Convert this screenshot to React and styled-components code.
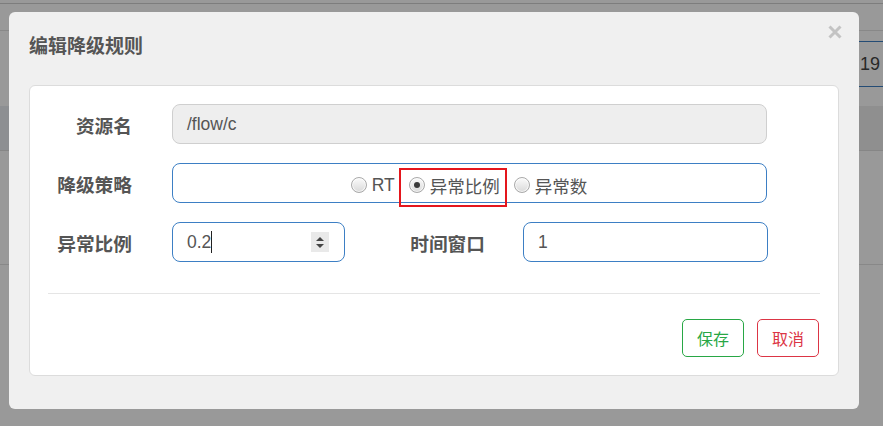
import React from "react";
import styled, { createGlobalStyle } from "styled-components";

const GlobalStyle = createGlobalStyle`
  html, body {
    margin: 0;
    padding: 0;
  }
  body {
    width: 883px;
    height: 426px;
    overflow: hidden;
    background: #fff;
    font-family: "Liberation Sans", "Noto Sans CJK SC", sans-serif;
    color: #555;
  }
  * {
    box-sizing: border-box;
  }
`;

// page that sits behind the dialog backdrop
const Page = styled.div`
  width: 883px;
  height: 426px;
  overflow: hidden;
  background: #fff;
`;
const TopStrip = styled.div`
  height: 4px;
  border-bottom: 1px solid #d0d0d0;
`;
const Toolbar = styled.div`
  height: 27px;
  border-bottom: 1px solid #e3e3e3;
`;
const SearchRow = styled.div`
  height: 75px;
  padding-top: 10px;
  display: flex;
  justify-content: flex-end;
`;
const PageInput = styled.div`
  width: 78px;
  height: 46px;
  margin-right: -40px;
  border: 1px solid #3d7fc4;
  border-right: none;
  padding-left: 14px;
  display: flex;
  align-items: center;
  font-size: 18px;
  color: #444;
`;
const TableHead = styled.div`
  height: 45px;
  background: linear-gradient(90deg, #eceff4 0, #eceff4 30px, #eeeeee 30px);
  border-bottom: 1px solid #e0e0e0;
`;
const TableRow = styled.div`
  height: 114px;
  border-bottom: 1px solid #e3e3e3;
`;

const Backdrop = styled.div`
  position: fixed;
  inset: 0;
  background: rgba(0, 0, 0, 0.4);
  padding: 12px 0 0 9px;
`;

const Modal = styled.div`
  width: 850px;
  background: #f0f0f0;
  border-radius: 6px;
  padding: 0 20px 33px;
`;
const Header = styled.div`
  display: flex;
  justify-content: space-between;
  align-items: flex-start;
  padding: 20px 0 27px;
  margin-right: -4px;
`;
const Title = styled.div`
  font-family: "Noto Sans CJK SC", sans-serif;
  font-size: 19px;
  font-weight: 700;
  line-height: 26px;
  color: #555;
`;
const Close = styled.button`
  margin-top: -8px;
  width: 16px;
  height: 16px;
  padding: 0;
  border: none;
  background: none;
  display: flex;
  align-items: center;
  justify-content: center;
  cursor: pointer;
`;

const Card = styled.div`
  background: #fff;
  border: 1px solid #dcdcdc;
  border-radius: 6px;
  padding: 18px 18px 18px 18px;
`;
const Form = styled.div`
  display: flex;
  flex-direction: column;
  gap: 19px;
`;
const Row = styled.div`
  display: flex;
  align-items: flex-start;
  height: 40px;
`;
const Label = styled.div`
  width: ${({ $width }) => $width}px;
  margin-right: ${({ $gap }) => $gap}px;
  flex-shrink: 0;
  text-align: right;
  padding-top: 9px;
  font-family: "Noto Sans CJK SC", sans-serif;
  font-size: 18.7px;
  font-weight: 700;
  line-height: 24px;
  color: #555;
`;
const Box = styled.div`
  width: ${({ $width }) => $width}px;
  height: 40px;
  flex-shrink: 0;
  display: flex;
  align-items: center;
  padding: 0 15px 0 14px;
  border: 1px solid ${({ $disabled }) => ($disabled ? "#cfcfcf" : "#3d7fc4")};
  background: ${({ $disabled }) => ($disabled ? "#eeeeee" : "#fff")};
  border-radius: 8px;
  font-size: 17.5px;
  color: #555;
`;
const Caret = styled.span`
  width: 1px;
  height: 22px;
  background: #222;
`;
const Spinner = styled.div`
  margin-left: auto;
  width: 18px;
  height: 20px;
  background: #e9e9e9;
  display: flex;
  flex-direction: column;
  align-items: center;
  justify-content: center;
  gap: 3px;
`;
const Arrow = styled.span`
  width: 0;
  height: 0;
  border-left: 4px solid transparent;
  border-right: 4px solid transparent;
  ${({ $up }) =>
    $up ? "border-bottom: 4px solid #444;" : "border-top: 4px solid #444;"}
`;

const RadioBox = styled(Box)`
  justify-content: center;
  padding-top: 4px;
  gap: 14px;
`;
const RadioItem = styled.label`
  position: relative;
  display: flex;
  align-items: center;
  height: 24px;
  cursor: pointer;
`;
const RadioMark = styled.span`
  position: relative;
  width: 16px;
  height: 16px;
  margin-right: 5px;
  border-radius: 50%;
  border: 1px solid #a9a9a9;
  background: linear-gradient(#fbfbfb, #d9d9d9);
  box-shadow: inset 0 0 0 1px rgba(255, 255, 255, 0.7);
  &::after {
    content: "";
    display: ${({ $checked }) => ($checked ? "block" : "none")};
    position: absolute;
    left: 4px;
    top: 4px;
    width: 6px;
    height: 6px;
    border-radius: 50%;
    background: #3a3a3a;
  }
`;
const Highlight = styled.span`
  position: absolute;
  left: -10px;
  right: -7px;
  top: -5px;
  bottom: -10px;
  border: 2px solid #e4161d;
  pointer-events: none;
`;

const Divider = styled.div`
  height: 1px;
  background: #e5e5e5;
  margin: 31px 0 25px;
`;
const Actions = styled.div`
  display: flex;
  justify-content: flex-end;
  gap: 13px;
  margin-right: 1px;
`;
const ActionButton = styled.button`
  width: 62px;
  height: 38px;
  padding: 0;
  background: #fff;
  border: 1px solid ${({ $color }) => $color};
  color: ${({ $color }) => $color};
  border-radius: 5px;
  font-family: "Noto Sans CJK SC", sans-serif;
  font-size: 16px;
  cursor: pointer;
`;

const strategies = [
  { key: "rt", text: "RT" },
  { key: "ratio", text: "异常比例", checked: true },
  { key: "count", text: "异常数" },
];

export default function App() {
  return (
    <>
      <GlobalStyle />
      <Page>
        <TopStrip />
        <Toolbar />
        <SearchRow>
          <PageInput>19</PageInput>
        </SearchRow>
        <TableHead />
        <TableRow />
      </Page>
      <Backdrop>
        <Modal>
          <Header>
            <Title>编辑降级规则</Title>
            <Close aria-label="close">
              <svg width="14" height="14" viewBox="0 0 14 14">
                <path
                  d="M1.5 1.5 L12.5 12.5 M12.5 1.5 L1.5 12.5"
                  stroke="#c3c3c3"
                  strokeWidth="3"
                  fill="none"
                />
              </svg>
            </Close>
          </Header>
          <Card>
            <Form>
              <Row>
                <Label $width={84} $gap={40}>资源名</Label>
                <Box $width={595} $disabled>/flow/c</Box>
              </Row>
              <Row>
                <Label $width={84} $gap={40}>降级策略</Label>
                <RadioBox $width={595}>
                  {strategies.map((s) => (
                    <RadioItem key={s.key}>
                      <RadioMark $checked={s.checked} />
                      {s.text}
                      {s.checked && <Highlight />}
                    </RadioItem>
                  ))}
                </RadioBox>
              </Row>
              <Row>
                <Label $width={84} $gap={40}>异常比例</Label>
                <Box $width={173}>
                  0.2
                  <Caret />
                  <Spinner>
                    <Arrow $up />
                    <Arrow />
                  </Spinner>
                </Box>
                <Label $width={140} $gap={38}>时间窗口</Label>
                <Box $width={245}>1</Box>
              </Row>
            </Form>
            <Divider />
            <Actions>
              <ActionButton $color="#28a745">保存</ActionButton>
              <ActionButton $color="#dc3545">取消</ActionButton>
            </Actions>
          </Card>
        </Modal>
      </Backdrop>
    </>
  );
}
